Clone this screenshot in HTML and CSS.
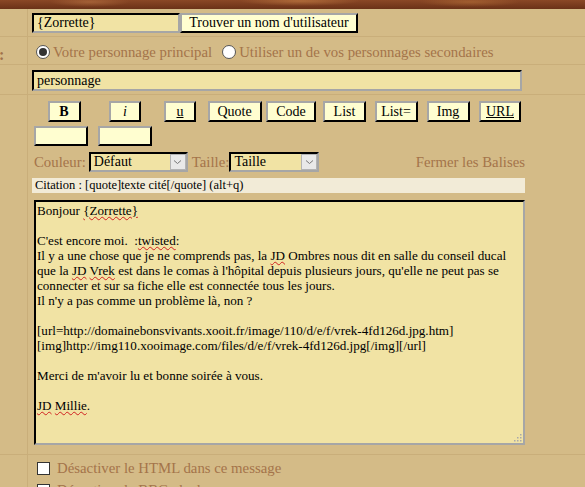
FILE: index.html
```html
<!DOCTYPE html>
<html lang="fr">
<head>
<meta charset="utf-8">
<title>Poster un message</title>
<link rel="stylesheet" href="styles.css">
</head>
<body>
<div class="header"></div>
<div class="form">
  <div class="row r1">
    <div class="lab"></div>
    <div class="cell">
      <span class="inp user">{Zorrette}</span><span class="btn find">Trouver un nom d'utilisateur</span>
    </div>
  </div>
  <div class="row r2">
    <div class="lab"><span class="colon">:</span></div>
    <div class="cell opts">
      <span class="radio on"></span><span class="txt">Votre personnage principal</span>
      <span class="radio"></span><span class="txt">Utiliser un de vos personnages secondaires</span>
    </div>
  </div>
  <div class="row r3">
    <div class="lab"></div>
    <div class="cell">
      <span class="inp subject">personnage</span>
    </div>
  </div>
  <div class="row r4">
    <div class="lab"></div>
    <div class="cell editor">
      <div class="tools">
        <span class="tcell"><span class="btn tb w-b"><b>B</b></span></span>
        <span class="tcell"><span class="btn tb w-i"><i>i</i></span></span>
        <span class="tcell"><span class="btn tb w-u"><u>u</u></span></span>
        <span class="tcell"><span class="btn tb w-quote">Quote</span></span>
        <span class="tcell"><span class="btn tb w-code">Code</span></span>
        <span class="tcell"><span class="btn tb w-list">List</span></span>
        <span class="tcell"><span class="btn tb w-list">List=</span></span>
        <span class="tcell"><span class="btn tb w-list">Img</span></span>
        <span class="tcell"><span class="btn tb w-url"><u>URL</u></span></span>
      </div>
      <div class="tools2">
        <span class="btn blank"></span>
        <span class="btn blank"></span>
      </div>
      <div class="fonts">
        <span class="txt">Couleur:</span>
        <span class="sel color"><span class="val">Défaut</span><span class="arrow"><svg width="9" height="6" viewBox="0 0 9 6"><path d="M1 1.5 L4.5 4.5 L8 1.5" fill="none" stroke="#777" stroke-width="1"/></svg></span></span>
        <span class="txt">Taille:</span>
        <span class="sel size"><span class="val">Taille</span><span class="arrow"><svg width="9" height="6" viewBox="0 0 9 6"><path d="M1 1.5 L4.5 4.5 L8 1.5" fill="none" stroke="#777" stroke-width="1"/></svg></span></span>
        <span class="txt close">Fermer les Balises</span>
      </div>
      <div class="help">Citation : [quote]texte cité[/quote] (alt+q)</div>
      <div class="area">
<div class="l">Bonjour <span class="sp">{Zorrette}</span></div>
<div class="l">&nbsp;</div>
<div class="l">C'est encore moi.&nbsp; :<span class="sp">twisted</span>:</div>
<div class="l">Il y a une chose que je ne comprends pas, la <span class="sp">JD</span> Ombres nous dit en salle du conseil ducal</div>
<div class="l">que la <span class="sp">JD</span> <span class="sp">Vrek</span> est dans le comas à l'hôpital depuis plusieurs jours, qu'elle ne peut pas se</div>
<div class="l">connecter et sur sa fiche elle est connectée tous les jours.</div>
<div class="l">Il n'y a pas comme un problème là, non ?</div>
<div class="l">&nbsp;</div>
<div class="l">[url=http://domainebonsvivants.xooit.fr/image/110/d/e/f/vrek-4fd126d.jpg.htm]</div>
<div class="l">[img]http://img110.xooimage.com/files/d/e/f/vrek-4fd126d.jpg[/img][/url]</div>
<div class="l">&nbsp;</div>
<div class="l">Merci de m'avoir lu et bonne soirée à vous.</div>
<div class="l">&nbsp;</div>
<div class="l"><span class="sp">JD</span> <span class="sp">Millie</span>.</div>
        <span class="grip"><svg width="8" height="8" viewBox="0 0 8 8"><g fill="#a9a9a9"><rect x="6" y="0" width="1.5" height="1.5"/><rect x="3" y="3" width="1.5" height="1.5"/><rect x="6" y="3" width="1.5" height="1.5"/><rect x="0" y="6" width="1.5" height="1.5"/><rect x="3" y="6" width="1.5" height="1.5"/><rect x="6" y="6" width="1.5" height="1.5"/></g></svg></span>
      </div>
    </div>
  </div>
  <div class="row r5">
    <div class="lab"></div>
    <div class="cell checks">
      <div class="chk"><span class="box"></span><span class="txt">Désactiver le HTML dans ce message</span></div>
      <div class="chk"><span class="box"></span><span class="txt">Désactiver le BBCode dans ce message</span></div>
    </div>
  </div>
</div>
</body>
</html>
```

FILE: styles.css
```css
html, body {
  margin: 0;
  padding: 0;
  background: #d4bb87;
  overflow: hidden;
  height: 487px;
}
body {
  font-family: "Liberation Serif", "DejaVu Serif", serif;
  color: #000;
}
.header {
  height: 9px;
  background:
    radial-gradient(ellipse 40px 5px at 90px 2px, rgba(190,120,70,.55), transparent),
    radial-gradient(ellipse 60px 5px at 300px 1px, rgba(200,130,70,.6), transparent),
    radial-gradient(ellipse 50px 5px at 470px 2px, rgba(190,120,60,.5), transparent),
    linear-gradient(#8a4826, #74381c 70%, #6a3218);
}
.row {
  display: flex;
  border-bottom: 1px solid #c9ae7a;
}
.lab {
  width: 27px;
  flex: none;
  border-right: 1px solid #c9ae7a;
  position: relative;
  overflow: hidden;
}
.colon {
  position: absolute;
  left: -1px;
  top: 9px;
  color: #a0714a;
  font-size: 16px;
  font-weight: bold;
}
.cell {
  flex: 1;
  padding-left: 4px;
}
.r1 { height: 27px; }
.r1 .cell { padding-top: 4px; display: flex; }
.inp {
  display: inline-block;
  box-sizing: border-box;
  background: #f1e3a4;
  border-style: solid;
  border-width: 2px;
  border-color: #000 #a6a6a6 #a6a6a6 #000;
  font-size: 14px;
  line-height: 16px;
  padding: 0 3px;
}
.user { width: 148px; height: 20px; }
.btn {
  display: inline-block;
  box-sizing: border-box;
  background: #fffed0;
  border-style: solid;
  border-width: 2px;
  border-color: #a6a6a6 #000 #000 #a6a6a6;
  font-size: 14px;
  text-align: center;
  color: #000;
}
.find { width: 178px; height: 20px; line-height: 16px; }
.r2 { height: 27px; }
.opts {
  display: flex;
  align-items: center;
  padding-left: 8px;
  padding-top: 3px;
  box-sizing: border-box;
}
.txt { color: #a4744a; font-size: 14.8px; }
.radio {
  width: 14px;
  height: 14px;
  box-sizing: border-box;
  border: 1px solid #555;
  border-radius: 50%;
  background: #fff;
  margin-right: 3px;
  position: relative;
}
.radio.on::after {
  content: "";
  position: absolute;
  left: 2px; top: 2px;
  width: 8px; height: 8px;
  border-radius: 50%;
  background: #333;
}
.opts .txt + .radio { margin-left: 10px; }
.r3 { height: 29px; }
.r3 .cell { padding-top: 5px; }
.subject { width: 490px; height: 21px; line-height: 17px; }
.r4 { height: 359px; }
.editor { padding-top: 6px; }
.tools {
  display: grid;
  grid-template-columns: 64px 58px 52px 57px 56px 51px 52px 52px 52px;
  justify-items: center;
  height: 21px;
}
.tb { height: 21px; line-height: 17px; font-size: 14px; }
.w-b { width: 33px; }
.w-i { width: 32px; }
.w-u { width: 32px; }
.w-quote { width: 54px; }
.w-code { width: 50px; }
.w-list { width: 43px; }
.w-url { width: 42px; }
.tools2 {
  display: flex;
  gap: 10px;
  padding-left: 2px;
  margin-top: 4px;
  height: 20px;
}
.blank { width: 54px; height: 20px; }
.fonts {
  display: flex;
  align-items: center;
  margin-top: 6px;
  height: 20px;
  padding-left: 2px;
}
.sel {
  display: inline-flex;
  align-items: center;
  box-sizing: border-box;
  height: 20px;
  background: #f1e3a4;
  border-style: solid;
  border-width: 2px;
  border-color: #000 #a6a6a6 #a6a6a6 #000;
  font-size: 14px;
  margin-left: 3px;
}
.sel .val { flex: 1; padding-left: 3px; }
.color { width: 99px; margin-right: 4px; }
.size { width: 90px; margin-left: 0; }
.arrow {
  width: 16px;
  height: 16px;
  box-sizing: border-box;
  background: #e9e9e9;
  border: 1px solid #b4b4b4;
  display: flex;
  align-items: center;
  justify-content: center;
}
.close { margin-left: auto; margin-right: 60px; }
.help {
  margin-top: 6px;
  width: 493px;
  height: 15px;
  background: #f2ebd7;
  font-size: 12.5px;
  line-height: 15px;
  padding-left: 3px;
  box-sizing: border-box;
}
.area {
  position: relative;
  margin-top: 7px;
  margin-left: 2px;
  width: 491px;
  height: 245px;
  box-sizing: border-box;
  background: #f1e3a4;
  border-style: solid;
  border-width: 2px;
  border-color: #000 #a6a6a6 #a6a6a6 #000;
  padding: 1px 0 0 1px;
  font-size: 13.1px;
  line-height: 15px;
  white-space: nowrap;
}
.sp {
  text-decoration: underline wavy #d02020;
  text-decoration-thickness: 1px;
  text-underline-offset: 1px;
}
.grip {
  position: absolute;
  right: 1px;
  bottom: 1px;
  line-height: 0;
}
.checks { padding-left: 9px; padding-top: 6px; }
.chk { display: flex; align-items: center; height: 15px; margin-bottom: 7px; }
.box {
  width: 13px; height: 13px;
  box-sizing: border-box;
  border: 1px solid #333;
  background: #fff;
  margin-right: 7px;
}
```
